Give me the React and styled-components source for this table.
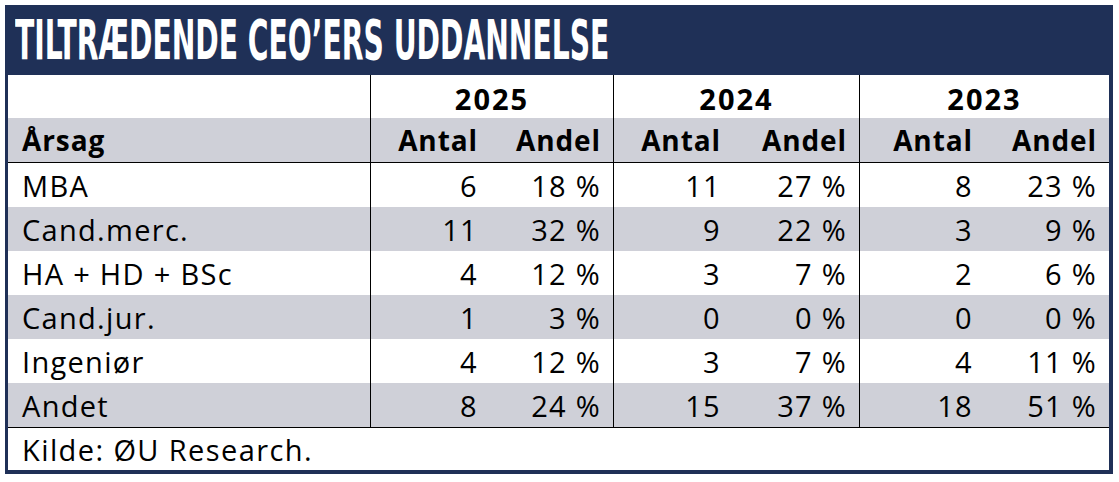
import React from 'react';
import styled, { createGlobalStyle } from 'styled-components';

const GlobalStyle = createGlobalStyle`
  html, body {
    margin: 0;
    padding: 0;
    background: #ffffff;
  }
  body {
    font-family: 'Open Sans', 'Noto Sans', Arial, sans-serif;
    color: #000000;
  }
`;

const NAVY = '#1f3057';
const GRAY = '#cfd0d8';
const COLS = '362px 120px 123px 120px 126px 126px 124px';

const Frame = styled.div`
  margin: 5px 0 0 5px;
  width: 1108px;
`;

const TitleBand = styled.div`
  height: 70px;
  background: ${NAVY};
  padding-left: 10px;
  display: flex;
  align-items: center;
  overflow: hidden;
`;

const Title = styled.h1`
  margin: 0;
  font-family: 'DejaVu Sans Condensed', 'DejaVu Sans', sans-serif;
  font-weight: 700;
  font-size: 55px;
  line-height: 1;
  color: #ffffff;
  white-space: nowrap;
  transform: scaleX(0.57);
  transform-origin: left center;
`;

const Body = styled.div`
  border-left: 3px solid ${NAVY};
  border-right: 4px solid ${NAVY};
  border-bottom: 4px solid ${NAVY};
`;

const Row = styled.div`
  display: grid;
  grid-template-columns: ${COLS};
  height: ${(p) => p.$h || 44}px;
  background: ${(p) => (p.$shaded ? GRAY : '#ffffff')};
  border-bottom: ${(p) => (p.$line ? '1px solid #000' : 'none')};
`;

const Cell = styled.div`
  display: flex;
  align-items: center;
  justify-content: ${(p) => (p.$left ? 'flex-start' : 'flex-end')};
  padding: ${(p) => (p.$left ? '0 0 0 14px' : '0 12px 0 0')};
  border-left: ${(p) => (p.$divider ? '1px solid #000' : 'none')};
  font-size: ${(p) => (p.$bold ? 28 : 29)}px;
  font-weight: ${(p) => (p.$bold ? 700 : 400)};
  letter-spacing: ${(p) => (p.$bold ? 0.9 : 1.3)}px;
  white-space: nowrap;
  box-sizing: border-box;
`;

const YearCell = styled.div`
  grid-column: span 2;
  display: flex;
  align-items: center;
  justify-content: center;
  padding-top: 3px;
  border-left: 1px solid #000;
  font-size: 29px;
  font-weight: 700;
  letter-spacing: 2px;
  box-sizing: border-box;
`;

const Footer = styled.div`
  height: 42px;
  display: flex;
  align-items: center;
  padding-left: 14px;
  font-size: 29px;
  letter-spacing: 1.4px;
  background: #ffffff;
`;

const years = ['2025', '2024', '2023'];

const rows = [
  { name: 'MBA', values: [6, 18, 11, 27, 8, 23] },
  { name: 'Cand.merc.', values: [11, 32, 9, 22, 3, 9] },
  { name: 'HA + HD + BSc', values: [4, 12, 3, 7, 2, 6] },
  { name: 'Cand.jur.', values: [1, 3, 0, 0, 0, 0] },
  { name: 'Ingeniør', values: [4, 12, 3, 7, 4, 11] },
  { name: 'Andet', values: [8, 24, 15, 37, 18, 51] },
];

function App() {
  return (
    <>
      <GlobalStyle />
      <Frame>
        <TitleBand>
          <Title>TILTRÆDENDE CEO’ERS UDDANNELSE</Title>
        </TitleBand>
        <Body>
          <Row $h={43}>
            <Cell $left />
            {years.map((y) => (
              <YearCell key={y}>{y}</YearCell>
            ))}
          </Row>
          <Row $shaded $line>
            <Cell $left $bold>Årsag</Cell>
            {years.map((y) => (
              <React.Fragment key={y}>
                <Cell $bold $divider>Antal</Cell>
                <Cell $bold>Andel</Cell>
              </React.Fragment>
            ))}
          </Row>
          {rows.map((r, i) => (
            <Row key={r.name} $shaded={i % 2 === 1} $line={i === rows.length - 1}>
              <Cell $left>{r.name}</Cell>
              {r.values.map((v, j) => (
                <Cell key={j} $divider={j % 2 === 0}>
                  {j % 2 === 0 ? v : `${v} %`}
                </Cell>
              ))}
            </Row>
          ))}
          <Footer>Kilde: ØU Research.</Footer>
        </Body>
      </Frame>
    </>
  );
}

export default App;
